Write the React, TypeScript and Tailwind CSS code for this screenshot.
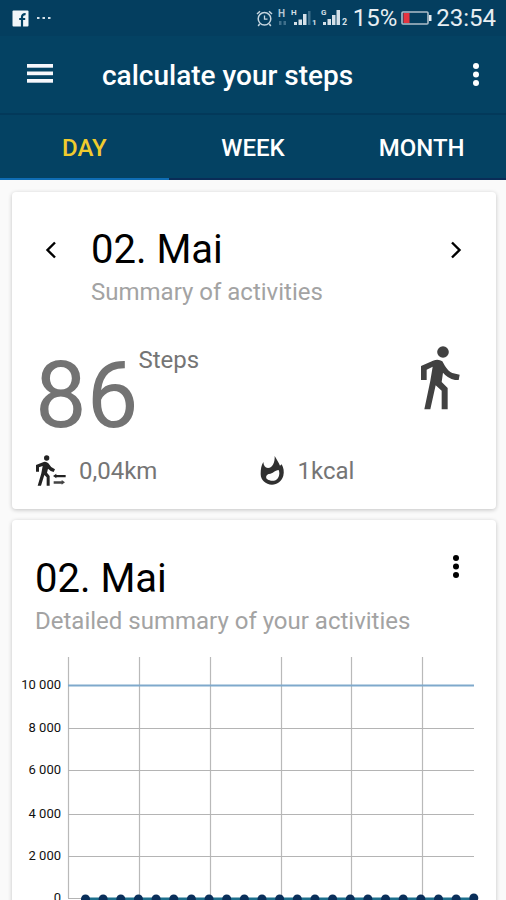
import { useState } from "react";

/* ── Icons ── */
const FacebookIcon = () => (
  <svg viewBox="0 0 17 17" className="h-[17px] w-[17px]">
    <rect x="0.5" y="0.5" width="16" height="16" rx="1" fill="#f2f6f9" />
    <path d="M10 17V10.5M10 11V7C10 5 11.2 4 13.6 4.2M7.2 9H13.2" stroke="#044263" strokeWidth="2.2" fill="none" />
  </svg>
);

const AlarmIcon = () => (
  <svg viewBox="0 0 17 17" fill="none" stroke="#c5d5df" className="h-[17px] w-[17px]">
    <circle cx="8.5" cy="8.8" r="6.3" strokeWidth="1.5" />
    <path d="M8.5 5.5V9.2H11.5" strokeWidth="1.3" />
    <path d="M1 4L4 1.2M16 4L13 1.2M3.6 14L2.2 16M13.4 14L14.8 16" strokeWidth="1.5" />
  </svg>
);

const SignalIcons = () => (
  <svg viewBox="0 0 72 18" className="h-[18px] w-[72px]" fill="#d5e0e8" fontFamily="Roboto, sans-serif">
    <text x="1" y="8" fontSize="10" fontWeight="700" fill="#b3c7d3">H</text>
    <path d="M2 12h2.5v4H2zM6.5 12H9v4H6.5z" fill="#3f6f8b" />
    <text x="14" y="6" fontSize="8" fontWeight="700">H</text>
    <path d="M17 13h3v3h-3zM21.5 10.5h3.5V16h-3.5zM26 5h3.5v11H26z" />
    <path d="M31 2h2.5v14H31z" fill="#3f6f8b" />
    <text x="35" y="16" fontSize="8" fontWeight="700">1</text>
    <text x="44" y="6" fontSize="8" fontWeight="700">G</text>
    <path d="M46 13h3v3h-3zM50.5 10h3.5v6h-3.5zM55 6h3.5v10H55zM59.5 1h3.5v15h-3.5z" />
    <text x="65" y="16" fontSize="9" fontWeight="700">2</text>
  </svg>
);

const BatteryIcon = () => (
  <svg viewBox="0 0 31 15" className="h-[15px] w-[31px]">
    <rect x="1" y="1" width="26" height="12" rx="1" fill="none" stroke="#aebfca" strokeWidth="1.6" />
    <rect x="2.5" y="2" width="6" height="10" fill="#e5343f" />
    <rect x="28" y="4" width="2.5" height="6" fill="#e8eef2" />
  </svg>
);

const MenuIcon = () => (
  <svg viewBox="0 0 28 24" className="h-6 w-7" fill="#f7f7fc">
    <rect x="1" y="1" width="26" height="3.7" />
    <rect x="1" y="8.5" width="26" height="3.7" />
    <rect x="1" y="16" width="26" height="3.7" />
  </svg>
);

const MoreIcon = () => (
  <svg viewBox="0 0 8 24" className="h-6 w-2" fill="currentColor">
    <circle cx="4" cy="3" r="3" />
    <circle cx="4" cy="11.5" r="3" />
    <circle cx="4" cy="20" r="3" />
  </svg>
);

const ChevronIcon = ({ flip }: { flip?: boolean }) => (
  <svg viewBox="0 0 12 18" fill="none" className="h-[18px] w-3">
    <path d={flip ? "M2 1.5L9.5 9L2 16.5" : "M10 1.5L2.5 9L10 16.5"} stroke="#000000" strokeWidth="2.4" />
  </svg>
);

const WalkIcon = () => (
  <svg viewBox="0 0 118 192" className="h-16 w-10" fill="#414141">
    <circle cx="68" cy="18" r="17.5" />
    <path d="M2 60L38 44Q54 38 66 46L74 60Q84 76 96 81L118 86L115 102L104 102Q82 97 68 80L64 108L82 126V190H64V134L46 118L30 190H12L30 104L37 62L19 71V102H2Z" />
  </svg>
);

const DistanceIcon = () => (
  <svg viewBox="0 0 96 96" className="h-8 w-8" fill="#222222">
    <circle cx="35" cy="9" r="8" />
    <path d="M3 30L26 21Q34 19 40 25Q46 37 60 43L56 51Q45 48 39 41L36 53L44 63V92H35V67L28 60L18 92H8L19 55L23 33L12 37V50H3Z" />
    <path d="M54 63L64 56V60H92V67H64V70Z" />
    <path d="M56 79H80V75L90 82L80 89V86H56Z" fill="#444444" />
  </svg>
);

const FlameIcon = () => (
  <svg viewBox="0 0 96 96" className="h-8 w-8" fill="#303030">
    <path
      fillRule="evenodd"
      d="M62 3C68 14 74 22 78 32L83 28C89 39 91 50 88 62C83 78 70 89 54 89C35 89 20 75 20 57C20 42 22 31 28 21C29 32 33 38 42 39C56 39 63 22 62 3ZM74 45C62 46 57 56 45 57C36 59 34 68 40 73C50 80 66 79 72 69C77 61 77 52 74 45Z"
    />
  </svg>
);

/* ── Data ── */
const tabs: string[] = ["DAY", "WEEK", "MONTH"];

const yTicks = [
  { label: "10 000", y: 36 },
  { label: "8 000", y: 79 },
  { label: "6 000", y: 121 },
  { label: "4 000", y: 165 },
  { label: "2 000", y: 207 },
  { label: "0", y: 249 },
];

const xLines: number[] = [56, 127, 198, 269, 339, 410];

const points: number[] = Array.from({ length: 23 }, (_, i) => 73.5 + i * 17.65);

/* ── Chart ── */
function StepsChart() {
  return (
    <svg viewBox="0 0 484 270" className="block w-full" role="img" aria-label="Steps per hour">
      {xLines.map((x) => (
        <line key={x} x1={x + 0.5} x2={x + 0.5} y1="8" y2="249" stroke="#b9b9b9" strokeWidth="1.2" />
      ))}
      {yTicks.map((t, i) => (
        <g key={t.label}>
          <line
            x1="56"
            x2="462"
            y1={t.y + 0.5}
            y2={t.y + 0.5}
            stroke={i === 0 ? "#7fa9cc" : "#b4b4b4"}
            strokeWidth={i === 0 ? 2 : 1.2}
          />
          <text x="49" y={t.y + 4} textAnchor="end" fontSize="13" fill="#111111">
            {t.label}
          </text>
        </g>
      ))}
      <line x1="73" x2="462" y1="250" y2="250" stroke="#1d6f8c" strokeWidth="3" />
      {points.map((x, i) => (
        <circle key={x} cx={x} cy={i === points.length - 1 ? 249 : 250} r="4.5" fill="#0a2f5a" />
      ))}
    </svg>
  );
}

/* ── Metric ── */
interface MetricProps {
  icon: React.ReactNode;
  value: string;
}

function Metric({ icon, value }: MetricProps) {
  return (
    <div className="flex items-center gap-3 text-2xl text-[#757575]">
      {icon}
      <span>{value}</span>
    </div>
  );
}

/* ── Main export ── */
export default function App() {
  const [active, setActive] = useState("DAY");

  return (
    <div className="flex h-screen flex-col overflow-hidden bg-[#fafafa] font-['Roboto',sans-serif]">
      <header className="shrink-0 bg-[#044263] text-white">
        {/* Status bar */}
        <div className="flex h-9 items-center justify-between bg-[#043e5f] pr-[10px] pl-3">
          <div className="flex items-center gap-2">
            <FacebookIcon />
            <svg viewBox="0 0 14 4" className="h-1 w-[14px]" fill="#d5e0e8">
              <path d="M0 1h2.5v2H0zM5.5 1H8v2H5.5zM11 1h2.5v2H11z" />
            </svg>
          </div>
          <div className="flex items-center gap-1 text-2xl text-[#e8eef2]">
            <AlarmIcon />
            <SignalIcons />
            <span>15%</span>
            <BatteryIcon />
            <span>23:54</span>
          </div>
        </div>

        {/* App bar */}
        <div className="flex h-[77px] items-center px-[26px]">
          <button type="button" aria-label="Menu">
            <MenuIcon />
          </button>
          <h1 className="ml-12 flex-1 pt-[2px] text-[28px] font-medium">calculate your steps</h1>
          <button type="button" aria-label="More options">
            <MoreIcon />
          </button>
        </div>

        {/* Tabs */}
        <nav className="grid h-[67px] grid-cols-3 border-t-2 border-[#03395a]">
          {tabs.map((tab) => (
            <button
              key={tab}
              type="button"
              onClick={() => setActive(tab)}
              className={
                "border-b-2 pt-[2px] text-2xl font-medium " +
                (active === tab ? "border-[#0f6db5] text-[#f0cb2e]" : "border-[#0a2c57] text-white")
              }
            >
              {tab}
            </button>
          ))}
        </nav>
      </header>

      <main className="flex flex-col gap-[11px] pt-3 pr-[10px] pl-3">
        {/* Summary card */}
        <section className="rounded-[4px] bg-white pt-[34px] pr-6 pb-[22px] pl-[23px] shadow-[0_1px_4px_rgba(0,0,0,0.22)]">
          <div className="flex items-start">
            <button type="button" aria-label="Previous day" className="flex h-12 w-8 items-center justify-center">
              <ChevronIcon />
            </button>
            <div className="ml-6 flex-1">
              <h2 className="text-[40px] leading-[48px] text-black">02. Mai</h2>
              <p className="mt-[2px] text-2xl text-[#a3a3a3]">Summary of activities</p>
            </div>
            <button type="button" aria-label="Next day" className="flex h-12 w-8 items-center justify-center">
              <ChevronIcon flip />
            </button>
          </div>

          <div className="mt-9 flex justify-between pr-3">
            <div className="flex items-start">
              <span className="pt-2 text-[92px] leading-[88px] text-[#737373]">86</span>
              <span className="text-2xl text-[#757575]">Steps</span>
            </div>
            <div className="pt-[2px]">
              <WalkIcon />
            </div>
          </div>

          <div className="mt-[15px] grid grid-cols-2">
            <Metric icon={<DistanceIcon />} value="0,04km" />
            <Metric icon={<FlameIcon />} value="1kcal" />
          </div>
        </section>

        {/* Detail card */}
        <section className="rounded-[4px] bg-white pt-[35px] shadow-[0_1px_4px_rgba(0,0,0,0.22)]">
          <div className="flex items-start pr-6 pl-[23px]">
            <div className="flex-1">
              <h2 className="text-[40px] leading-[48px] text-black">02. Mai</h2>
              <p className="mt-[2px] text-2xl text-[#a3a3a3]">Detailed summary of your activities</p>
            </div>
            <button type="button" aria-label="Chart options" className="flex w-8 justify-center text-black">
              <MoreIcon />
            </button>
          </div>
          <div className="mt-3">
            <StepsChart />
          </div>
        </section>
      </main>
    </div>
  );
}
